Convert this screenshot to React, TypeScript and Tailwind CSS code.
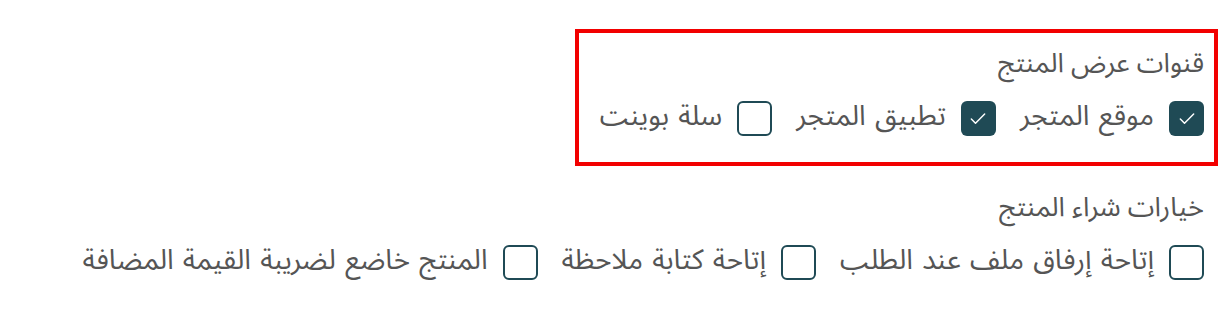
import { Check } from 'lucide-react';

interface Option {
  label: string;
  checked: boolean;
}

const channels: Option[] = [
  { label: 'موقع المتجر', checked: true },
  { label: 'تطبيق المتجر', checked: true },
  { label: 'سلة بوينت', checked: false },
];

const purchase: Option[] = [
  { label: 'إتاحة إرفاق ملف عند الطلب', checked: false },
  { label: 'إتاحة كتابة ملاحظة', checked: false },
  { label: 'المنتج خاضع لضريبة القيمة المضافة', checked: false },
];

function CheckItem({ option }: { option: Option }) {
  return (
    <label className="flex items-center gap-[15px]">
      <span
        className={
          option.checked
            ? 'w-[35px] h-[35px] rounded-[6px] bg-[#1f4a55] flex items-center justify-center text-white'
            : 'w-[35px] h-[35px] rounded-[6px] border-2 border-[#1f4a55] bg-white'
        }
      >
        {option.checked && <Check size={20} strokeWidth={1.75} />}
      </span>
      <span className="text-[28px] text-[#555555] leading-[35px] pb-[4px] [word-spacing:2px]">{option.label}</span>
    </label>
  );
}

function Section({ title, options }: { title: string; options: Option[] }) {
  return (
    <div>
      <h3 className="text-[27px] text-[#555555] leading-[30px] mb-[20px]">{title}</h3>
      <div className="flex items-center gap-[24px]">
        {options.map((o) => (
          <CheckItem key={o.label} option={o} />
        ))}
      </div>
    </div>
  );
}

export default function App() {
  return (
    <div
      dir="rtl"
      className="w-[1226px] h-[328px] bg-white pr-[22px] pt-[29px]"
      style={{ fontFamily: '"Noto Sans Arabic", "DejaVu Sans", sans-serif' }}
    >
      <div className="w-[643px] -mr-[14px] border-[4px] border-[#f20000] pr-[10px] pt-[16px] pb-[24px]">
        <Section title="قنوات عرض المنتج" options={channels} />
      </div>
      <div className="pt-[27px]">
        <Section title="خيارات شراء المنتج" options={purchase} />
      </div>
    </div>
  );
}
